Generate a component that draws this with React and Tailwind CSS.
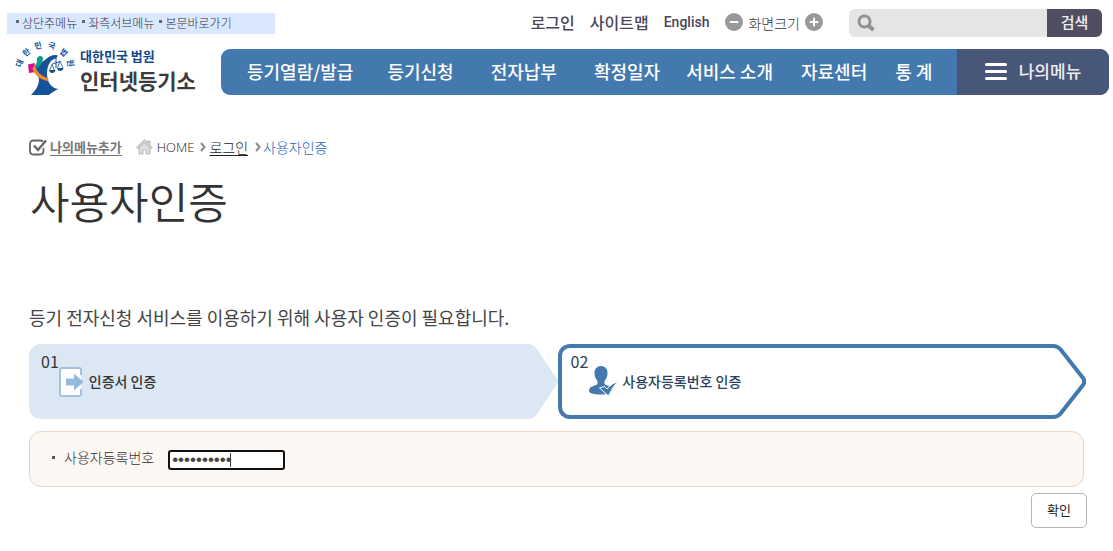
import { useState } from 'react';
import { Minus, Plus } from 'lucide-react';

const skipLinks = [
  { label: '상단주메뉴', href: '#menu' },
  { label: '좌측서브메뉴', href: '#submenu' },
  { label: '본문바로가기', href: '#content' },
];

const menuItems = [
  { label: '등기열람/발급', space: 'ml-[26px]' },
  { label: '등기신청', space: 'ml-[34px]' },
  { label: '전자납부', space: 'ml-[37px]' },
  { label: '확정일자', space: 'ml-[37px]' },
  { label: '서비스 소개', space: 'ml-[26px]' },
  { label: '자료센터', space: 'ml-7' },
  { label: '통 계', space: 'ml-7' },
];

const LogoMark = () => (
  <svg viewBox="0 0 66 60" className="w-[66px] h-[60px] shrink-0" aria-hidden="true">
    <g fill="#14539a" fontSize="8" fontWeight="700" textAnchor="middle" dominantBaseline="central">
      <text transform="translate(7 25) rotate(-68)">대</text>
      <text transform="translate(14 14) rotate(-38)">한</text>
      <text transform="translate(26 7) rotate(-12)">민</text>
      <text transform="translate(40 7) rotate(15)">국</text>
      <text transform="translate(52 14) rotate(42)">법</text>
      <text transform="translate(59 25) rotate(80)">원</text>
    </g>
    <path d="M23 28C30 26 35 18 42 17L46 17.500C45 20.500 41 21 39 23C35 28 34 35 36 42C37.500 47 41 50 46 51C43 53 40 54 37 57H19C23 53 27 48 27 41Z" fill="#14539a" />
    <path d="M25 24c-1-4 1-6 3.500-6s3 3 2 5l-1 3-4 4-3-1z" fill="#0c9c8a" />
    <path d="M16 26.500l6.500-1.500 1.500 9-7 1z" fill="#d0128a" />
    <path d="M22 27C25 34 29 38.500 36.500 40L36 43C28 42 23 37 20.500 31Z" fill="#f08a2c" />
    <g fill="none" stroke="#14539a">
      <path d="M44 17v13" strokeWidth="1" />
      <path d="M40 26.500c1-2 6-1 8-3.500" strokeWidth="1" />
      <path d="M40 26.500l-2.500 6M40 26.500l2.500 6M48 23l-2.500 7M48 23l3 7" strokeWidth=".8" />
    </g>
    <path d="M37 32h6.500c-.5 4-6 4-6.500 0zM45 30h6.500c-.5 4-6 4-6.500 0z" fill="#14539a" />
  </svg>
);

const SearchIcon = () => (
  <svg viewBox="0 0 18 18" className="w-[18px] h-[18px] shrink-0" fill="none" stroke="#929292" aria-hidden="true">
    <circle cx="7.500" cy="7.500" r="5.500" strokeWidth="3" />
    <path d="M12 12l4.500 4" strokeWidth="4" />
  </svg>
);

const MyMenuIcon = () => (
  <svg viewBox="0 0 18 17" className="w-[18px] h-[17px]" fill="none" stroke="#666" aria-hidden="true">
    <path d="M14 2.500C13 1.500 12 1.500 11 1.500H4.500C2 1.500 1 3 1 5v6.500C1 14 2 15.500 4.500 15.500H11c2 0 3.500-1.500 3.500-4V9" strokeWidth="1.800" />
    <path d="M5 6.500l4 4.500L17 1.500" strokeWidth="2.400" />
  </svg>
);

const HomeIcon = () => (
  <svg viewBox="0 0 17 16" className="w-[17px] h-4" stroke="#b0b0b0" strokeWidth=".8" aria-hidden="true">
    <path d="M3 8v7h4v-4h3v4h4V8L8.500 3z" fill="#ddd" />
    <path d="M.5 8.500l8-8L11.500 3.500V2h2.500v4l2.500 2.500-1.200 1L8.500 3.500 1.700 9.500z" fill="#d4d4d4" />
  </svg>
);

const Chevron = () => (
  <svg viewBox="0 0 6 10" className="w-1.5 h-2.5" fill="none" stroke="#8a8a8a" strokeWidth="2" aria-hidden="true">
    <path d="M1 1l3.500 4L1 9" />
  </svg>
);

const CertIcon = () => (
  <svg viewBox="0 0 25 30" className="w-[25px] h-[30px]" aria-hidden="true">
    <path d="M22 8V3a2 2 0 0 0-2-2H3a2 2 0 0 0-2 2v24a2 2 0 0 0 2 2h17a2 2 0 0 0 2-2v-5" fill="#fff" stroke="#a0c2de" strokeWidth="2" />
    <path d="M7 11.500h8V6.500l9.500 8.500-9.500 8.500v-5H7z" fill="#94bbdb" />
  </svg>
);

const UserCheckIcon = () => (
  <svg viewBox="0 0 30 30" className="w-[30px] h-[30px]" aria-hidden="true">
    <path d="M13 0c4 0 6.500 3 6.500 7 0 3-1 6-3 8v3c3 2 7 2 7 6 0 3-4 4.500-11 4.500S1 27 1 25c0-5 6.500-5 8.500-7v-3c-2-2-3-5-3-8 0-4 2.500-7 6.500-7z" fill="#4479ae" />
    <path d="M11.500 22l5-1.500 2.500 2.500C22 19.500 25 17 30 15.500 25.500 20 23.500 24 20.500 30z" fill="#4479ae" stroke="#fff" strokeWidth="1" />
  </svg>
);

const Header = () => (
  <header className="pr-1">
    <div className="flex items-center justify-between pt-[9px] pl-[7px] pr-[7px]">
      <ul className="flex items-center gap-[5px] w-[268px] h-[21px] pl-[9px] bg-[#dae8ff] text-xs font-light text-[#333]">
        {skipLinks.map((link) => (
          <li key={link.label} className="flex items-center gap-[3px] whitespace-nowrap">
            <span className="w-[3px] h-[3px] mb-1 bg-[#666]"></span>
            <a href={link.href}>{link.label}</a>
          </li>
        ))}
      </ul>
      <div className="flex items-center text-[#4a4658] whitespace-nowrap">
        <div className="flex items-center gap-[15px] pb-[3px] font-medium">
          <a href="#login">로그인</a>
          <a href="#sitemap">사이트맵</a>
          <a href="#english" className="font-[Roboto] text-sm">English</a>
        </div>
        <button aria-label="축소" className="ml-4 mb-0.5 flex items-center justify-center w-[18px] h-[18px] rounded-full bg-[#999] text-white">
          <Minus size={12} strokeWidth={4} />
        </button>
        <span className="mx-[5px] text-sm font-light text-[#333]">화면크기</span>
        <button aria-label="확대" className="mb-0.5 flex items-center justify-center w-[18px] h-[18px] rounded-full bg-[#999] text-white">
          <Plus size={12} strokeWidth={4} />
        </button>
        <form className="ml-[26px] flex h-7 rounded-md overflow-hidden bg-[#e5e5e5]" onSubmit={(e) => e.preventDefault()}>
          <label htmlFor="search" className="flex items-center pl-2">
            <SearchIcon />
          </label>
          <input id="search" type="text" aria-label="검색어" className="w-[172px] px-2 text-sm outline-none" />
          <button className="w-[55px] pb-0.5 bg-[#504e60] text-[15px] font-medium text-[#eee]">검색</button>
        </form>
      </div>
    </div>

    <div className="mt-px flex items-end">
      <a href="#home" className="flex items-center shrink-0 w-[221px] pl-3">
        <LogoMark />
        <span className="ml-0.5 pt-1 font-bold whitespace-nowrap">
          <span className="block text-[13px] leading-5 text-[#14488c]">대한민국 법원</span>
          <span className="block text-[21px] leading-7 text-[#3c3c3c]">인터넷등기소</span>
        </span>
      </a>
      <nav id="menu" className="flex flex-1 justify-between mb-[3px] h-[46px] rounded-[9px] overflow-hidden bg-[#4479ae] text-white">
        <ul className="flex items-center pb-0.5 text-lg font-medium whitespace-nowrap">
          {menuItems.map((item) => (
            <li key={item.label} className={item.space}>
              <a href="#menu">{item.label}</a>
            </li>
          ))}
        </ul>
        <button className="flex items-center justify-center gap-3 w-[152px] pb-0.5 bg-[#485678] text-[17px] font-medium text-[#eee]">
          <span className="flex flex-col gap-1">
            <span className="w-[22px] h-[3px] rounded-sm bg-white"></span>
            <span className="w-[22px] h-[3px] rounded-sm bg-white"></span>
            <span className="w-[22px] h-[3px] rounded-sm bg-white"></span>
          </span>
          나의메뉴
        </button>
      </nav>
    </div>
  </header>
);

const Steps = () => (
  <ol className="mt-[15px] flex h-[75px] text-sm font-medium">
    <li className="flex flex-1">
      <div className="flex flex-1 rounded-l-xl bg-[#dbe7f3] pl-3 pt-[7px] text-[#333]">
        <span className="text-base leading-5 font-normal">01</span>
        <span className="flex items-start gap-[5px] mt-4">
          <CertIcon />
          <span className="leading-7">인증서 인증</span>
        </span>
      </div>
      <svg viewBox="0 0 30 75" className="w-[30px] h-[75px] shrink-0" aria-hidden="true">
        <path d="M0 0q5 0 9 5l20 30q1.500 2.500 0 5L9 70q-4 5-9 5z" fill="#dbe7f3" />
      </svg>
    </li>
    <li className="flex flex-1" aria-current="step">
      <div className="flex flex-1 rounded-l-xl border-4 border-r-0 border-[#4479ae] pl-[9px] pt-[3px] text-[#2b3f5c]">
        <span className="text-base leading-5 font-normal">02</span>
        <span className="flex items-start gap-1 mt-[15px]">
          <UserCheckIcon />
          <span className="leading-[30px]">사용자등록번호 인증</span>
        </span>
      </div>
      <svg viewBox="0 0 34 75" className="w-[34px] h-[75px] shrink-0" aria-hidden="true">
        <path d="M0 2h1q5 0 8 4l22 28q2.500 3.500 0 7L9 69q-3 4-8 4H0" fill="none" stroke="#4479ae" strokeWidth="4" />
      </svg>
    </li>
  </ol>
);

const App = () => {
  const [userNo, setUserNo] = useState('1234567890');

  return (
    <div className="min-w-[1100px] bg-white font-['Noto_Sans_CJK_KR',sans-serif]">
      <Header />
      <main id="content" className="pl-[29px] pr-[27px] pb-6">
        <div className="mt-[39px] flex items-center h-5 text-sm font-light text-[#222] whitespace-nowrap">
          <button className="flex items-center gap-[3px]">
            <MyMenuIcon />
            <span className="border-b border-[#777] text-[13px] leading-4 font-bold text-[#777]">나의메뉴추가</span>
          </button>
          <span className="ml-3.5"><HomeIcon /></span>
          <a href="#home" className="ml-1 font-['Open_Sans'] text-[13px]">HOME</a>
          <span className="ml-1.5"><Chevron /></span>
          <a href="#login" className="ml-[3px] underline underline-offset-2">로그인</a>
          <span className="ml-[7px]"><Chevron /></span>
          <a href="#auth" className="ml-0.5 text-[#2a66c8]">사용자인증</a>
        </div>

        <h1 className="mt-[13px] ml-px text-[43px] leading-[60px] font-[350] text-[#333]">사용자인증</h1>
        <p className="mt-[75px] text-lg leading-6 text-[#444]">
          등기 전자신청 서비스를 이용하기 위해 사용자 인증이 필요합니다.
        </p>

        <Steps />

        <form onSubmit={(e) => e.preventDefault()}>
          <div className="mt-3 mr-0.5 flex items-center h-14 rounded-xl border border-[#e8d6c9] bg-[#fcf7f3] pl-[22px] text-sm font-light text-[#333]">
            <span className="w-[3px] h-[3px] mb-1 bg-[#555]"></span>
            <label htmlFor="userNo" className="ml-[9px] mb-1">사용자등록번호</label>
            <div className="relative ml-3.5 mt-0.5">
              <input
                id="userNo"
                type="password"
                autoFocus
                value={userNo}
                onChange={(e) => setUserNo(e.target.value)}
                className="block w-[117px] h-5 rounded-[3px] border-2 border-[#111] bg-white px-0.5 font-['Liberation_Sans'] text-[17px] text-[#444] caret-transparent outline-none"
              />
              <span className="absolute left-[62px] top-[3px] w-px h-3.5 bg-[#444]"></span>
            </div>
          </div>
          <div className="mt-1.5 -mr-px flex justify-end">
            <button className="w-14 h-[35px] pb-0.5 rounded-[5px] border border-[#b5b5b5] bg-white text-[13px] text-[#222]">확인</button>
          </div>
        </form>
      </main>
    </div>
  );
};

export default App;
